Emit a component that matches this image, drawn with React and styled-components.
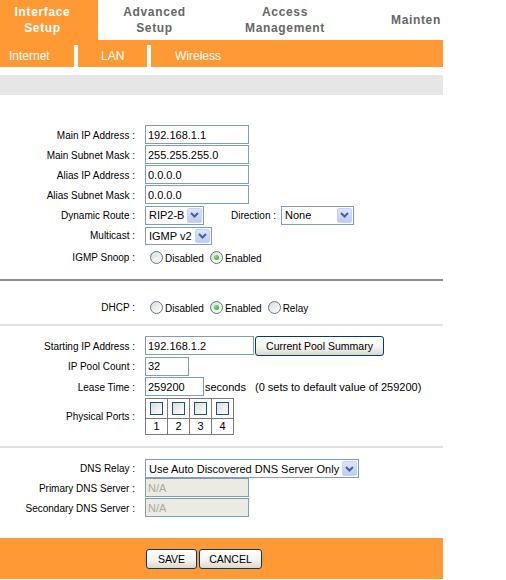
import React from "react";
import styled, { createGlobalStyle } from "styled-components";

const ORANGE = "#ff9933";

const GlobalStyle = createGlobalStyle`
  body {
    margin: 0;
    background: #fff;
    font-family: "Liberation Sans", Arial, sans-serif;
  }
`;

const Page = styled.div`
  width: 443px;
`;

const TopNav = styled.div`
  display: flex;
  height: 40px;
`;

const Tab = styled.div`
  flex: none;
  width: ${(p) => p.$w}px;
  height: 40px;
  box-sizing: border-box;
  padding-left: ${(p) => p.$pad || 0}px;
  padding-right: ${(p) => p.$padR || 0}px;
  display: flex;
  flex-direction: column;
  justify-content: center;
  text-align: ${(p) => (p.$pad ? "left" : "center")};
  background: ${(p) => (p.$active ? ORANGE : "#fff")};
  color: ${(p) => (p.$active ? "#fff" : "#666")};
  font-weight: bold;
  font-size: 12px;
  line-height: 16px;
  letter-spacing: 0.65px;
  white-space: nowrap;
`;

const SubNav = styled.div`
  display: flex;
  height: 27px;
  padding-top: 5px;
  box-sizing: border-box;
  background: ${ORANGE};
`;

const SubItem = styled.div`
  flex: ${(p) => (p.$w ? "none" : "1")};
  width: ${(p) => (p.$w ? `${p.$w}px` : "auto")};
  box-sizing: border-box;
  height: 22px;
  line-height: 22px;
  padding-left: ${(p) => p.$pad}px;
  border-left: ${(p) => (p.$sep ? "4px solid #fff" : "none")};
  color: #fff;
  font-size: 12px;
`;

const GrayBar = styled.div`
  margin-top: 8px;
  height: 20px;
  background: #e6e6e6;
`;

const Section = styled.div`
  padding: ${(p) => p.$top}px 0 ${(p) => p.$bottom}px;
`;

const Divider = styled.div`
  height: 2px;
  background: ${(p) => (p.$thick ? "#8e8e8e" : "#e2e2e2")};
`;

const Row = styled.div`
  display: flex;
  align-items: center;
  height: ${(p) => p.$h || 20}px;
`;

const Label = styled.div`
  flex: none;
  width: 145px;
  box-sizing: border-box;
  padding-right: 10px;
  text-align: right;
  font-size: 10px;
  color: #000;
  white-space: nowrap;
`;

const InlineLabel = styled.span`
  margin: 0 5px 0 27px;
  font-size: 10px;
  color: #000;
`;

const TextBox = styled.input`
  width: ${(p) => p.$w}px;
  height: 19px;
  margin: 0 0 1px;
  padding: 0 2px;
  box-sizing: border-box;
  border: 1px solid #7f9db9;
  border-radius: 0;
  outline: none;
  font-family: "Liberation Sans", Arial, sans-serif;
  font-size: 11px;
  color: ${(p) => (p.disabled ? "#aca899" : "#000")};
  background: ${(p) => (p.disabled ? "#ebebe4" : "#fff")};
`;

const SelectBox = styled.div`
  width: ${(p) => p.$w}px;
  height: ${(p) => p.$h || 19}px;
  box-sizing: border-box;
  display: flex;
  align-items: center;
  border: 1px solid #7f9db9;
  padding-left: 3px;
  font-size: 11px;
  color: #000;
  background: #fff;
  white-space: nowrap;
`;

const SelectValue = styled.span`
  flex: 1;
  overflow: hidden;
`;

const SelectArrow = styled.span`
  flex: none;
  width: 15px;
  height: calc(100% - 2px);
  margin-right: 1px;
  box-sizing: border-box;
  display: flex;
  align-items: center;
  justify-content: center;
  border: 1px solid #c3d3fd;
  border-radius: 2px;
  background: linear-gradient(#dce6fe, #b9cdf8);
`;

const RadioGroup = styled.div`
  display: flex;
  align-items: center;
`;

const RadioOption = styled.label`
  display: flex;
  align-items: center;
  margin-right: 4px;
  font-size: 10px;
  line-height: 13px;
  color: #000;
`;

const RadioText = styled.span`
  padding-top: 2px;
`;

const RadioDot = styled.span`
  flex: none;
  width: 13px;
  height: 13px;
  box-sizing: border-box;
  margin: 0 2px 0 ${(p) => (p.$first ? 5 : 2)}px;
  border-radius: 50%;
  border: 1px solid #5b7490;
  background: linear-gradient(135deg, #dcdcd7, #fff);
  display: flex;
  align-items: center;
  justify-content: center;

  &::after {
    content: "";
    display: ${(p) => (p.$on ? "block" : "none")};
    width: 5px;
    height: 5px;
    border-radius: 50%;
    background: radial-gradient(circle at 35% 35%, #7fe07b, #21a121);
  }
`;

const PoolButton = styled.button`
  width: ${(p) => p.$w}px;
  height: 20px;
  margin-left: ${(p) => p.$ml || 0}px;
  padding: 0;
  border: 1px solid #003c74;
  border-radius: 3px;
  background: linear-gradient(#ffffff, #f4f4f0 55%, #dcd7cb);
  font-family: "Liberation Sans", Arial, sans-serif;
  font-size: 10.5px;
  color: #000;
`;

const Helper = styled.span`
  margin-left: ${(p) => p.$ml || 0}px;
  font-size: 11px;
  color: #000;
  white-space: nowrap;
`;

const Ports = styled.table`
  border-collapse: collapse;
  border: 1px solid #6e6e6e;

  td {
    width: 21px;
    padding: 0;
    border: 1px solid #7a7a7a;
    font-size: 11px;
    color: #000;
    text-align: center;
  }
`;

const CheckCell = styled.td`
  height: 19px;
`;

const NumCell = styled.td`
  height: 15px;
  line-height: 15px;
`;

const CheckBox = styled.span`
  display: block;
  width: 13px;
  height: 13px;
  margin: 0 auto;
  box-sizing: border-box;
  border: 1px solid #1c5180;
  background: linear-gradient(135deg, #dcdcd7, #ffffff);
`;

const Footer = styled.div`
  height: 41px;
  box-sizing: border-box;
  padding: 11px 0 0 146px;
  display: flex;
  gap: 2px;
  background: ${ORANGE};
`;

function Chevron() {
  return (
    <svg width="9" height="6" viewBox="0 0 9 6">
      <path d="M1 1 L4.5 4.5 L8 1" fill="none" stroke="#4d6185" strokeWidth="2" />
    </svg>
  );
}

function Select({ w, h, value }) {
  return (
    <SelectBox $w={w} $h={h}>
      <SelectValue>{value}</SelectValue>
      <SelectArrow>
        <Chevron />
      </SelectArrow>
    </SelectBox>
  );
}

function Radios({ options, checked }) {
  return (
    <RadioGroup>
      {options.map((o, i) => (
        <RadioOption key={o}>
          <RadioDot $first={i === 0} $on={o === checked} />
          <RadioText>{o}</RadioText>
        </RadioOption>
      ))}
    </RadioGroup>
  );
}

export default function App() {
  return (
    <Page>
      <GlobalStyle />
      <TopNav>
        <Tab $w={98} $padR={13} $active>
          <span>Interface</span>
          <span>Setup</span>
        </Tab>
        <Tab $w={113}>
          <span>Advanced</span>
          <span>Setup</span>
        </Tab>
        <Tab $w={148}>
          <span>Access</span>
          <span>Management</span>
        </Tab>
        <Tab $w={84} $pad={32}>
          <span>Mainten</span>
        </Tab>
      </TopNav>
      <SubNav>
        <SubItem $w={74} $pad={9}>Internet</SubItem>
        <SubItem $w={73} $pad={23} $sep>LAN</SubItem>
        <SubItem $pad={24} $sep>Wireless</SubItem>
      </SubNav>
      <GrayBar />

      <Section $top={30} $bottom={11}>
        <Row>
          <Label>Main IP Address :</Label>
          <TextBox $w={104} defaultValue="192.168.1.1" readOnly />
        </Row>
        <Row>
          <Label>Main Subnet Mask :</Label>
          <TextBox $w={104} defaultValue="255.255.255.0" readOnly />
        </Row>
        <Row>
          <Label>Alias IP Address :</Label>
          <TextBox $w={104} defaultValue="0.0.0.0" readOnly />
        </Row>
        <Row>
          <Label>Alias Subnet Mask :</Label>
          <TextBox $w={104} defaultValue="0.0.0.0" readOnly />
        </Row>
        <Row>
          <Label>Dynamic Route :</Label>
          <Select w={59} value="RIP2-B" />
          <InlineLabel>Direction :</InlineLabel>
          <Select w={73} value="None" />
        </Row>
        <Row $h={21}>
          <Label>Multicast :</Label>
          <Select w={67} h={18} value="IGMP v2" />
        </Row>
        <Row $h={22}>
          <Label>IGMP Snoop :</Label>
          <Radios options={["Disabled", "Enabled"]} checked="Enabled" />
        </Row>
      </Section>
      <Divider $thick />

      <Section $top={15} $bottom={6}>
        <Row $h={22}>
          <Label>DHCP :</Label>
          <Radios options={["Disabled", "Enabled", "Relay"]} checked="Enabled" />
        </Row>
      </Section>
      <Divider />

      <Section $top={10} $bottom={11}>
        <Row>
          <Label>Starting IP Address :</Label>
          <TextBox $w={109} defaultValue="192.168.1.2" readOnly />
          <PoolButton $w={129} $ml={1}>Current Pool Summary</PoolButton>
        </Row>
        <Row $h={21}>
          <Label>IP Pool Count :</Label>
          <TextBox $w={44} defaultValue="32" readOnly />
        </Row>
        <Row>
          <Label>Lease Time :</Label>
          <TextBox $w={59} defaultValue="259200" readOnly />
          <Helper $ml={1}>seconds</Helper>
          <Helper $ml={9}>(0 sets to default value of 259200)</Helper>
        </Row>
        <Row $h={38}>
          <Label>Physical Ports :</Label>
          <Ports>
            <tbody>
              <tr>
                {[1, 2, 3, 4].map((n) => (
                  <CheckCell key={n}>
                    <CheckBox />
                  </CheckCell>
                ))}
              </tr>
              <tr>
                {[1, 2, 3, 4].map((n) => (
                  <NumCell key={n}>{n}</NumCell>
                ))}
              </tr>
            </tbody>
          </Ports>
        </Row>
      </Section>
      <Divider />

      <Section $top={11} $bottom={20}>
        <Row $h={19}>
          <Label>DNS Relay :</Label>
          <Select w={214} h={19} value="Use Auto Discovered DNS Server Only" />
        </Row>
        <Row>
          <Label>Primary DNS Server :</Label>
          <TextBox $w={104} defaultValue="N/A" disabled />
        </Row>
        <Row>
          <Label>Secondary DNS Server :</Label>
          <TextBox $w={104} defaultValue="N/A" disabled />
        </Row>
      </Section>

      <Footer>
        <PoolButton $w={51}>SAVE</PoolButton>
        <PoolButton $w={63}>CANCEL</PoolButton>
      </Footer>
    </Page>
  );
}
